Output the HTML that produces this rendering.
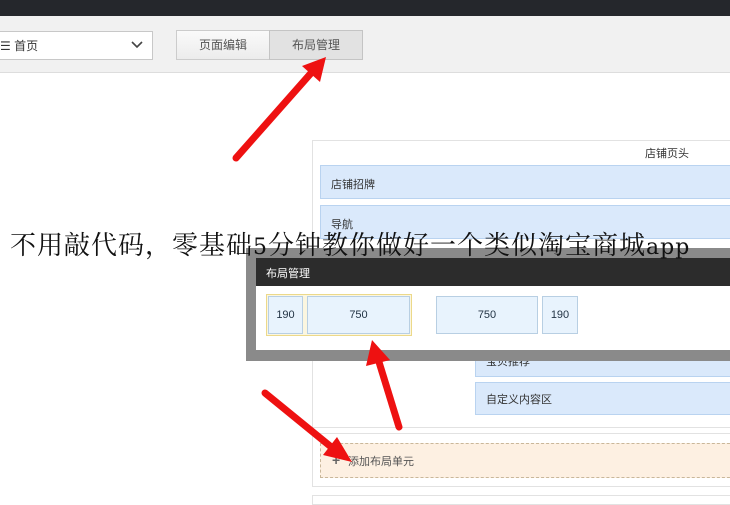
<!DOCTYPE html>
<html><head><meta charset="utf-8"><style>
*{margin:0;padding:0;box-sizing:border-box}
body{width:730px;height:500px;overflow:hidden;background:#fff;position:relative;font-family:"Liberation Sans","Noto Sans CJK SC",sans-serif;font-size:12px;color:#333}
.a{position:absolute}
.blue{background:#dae9fb;border:1px solid #b9d3f0}
.box{background:#e8f3fd;border:1px solid #b8cfe3;display:flex;align-items:center;justify-content:center;color:#234;font-size:11px}
</style></head><body>
<div class="a" style="left:0;top:0;width:730px;height:16px;background:#25272c"></div>
<div class="a" style="left:0;top:16px;width:730px;height:57px;background:#f1f1f1;border-bottom:1px solid #ddd"></div>
<div class="a" style="left:-2px;top:31px;width:155px;height:29px;background:#fff;border:1px solid #c8c8c8"></div>
<div class="a" style="left:0;top:37px;font-size:12px;">☰ 首页</div>
<svg class="a" style="left:130px;top:40px" width="14" height="10"><path d="M2 2 L7 7 L12 2" stroke="#444" stroke-width="1.6" fill="none"/></svg>
<div class="a" style="left:176px;top:30px;width:94px;height:30px;background:linear-gradient(#fafafa,#ececec);border:1px solid #ccc;text-align:center;line-height:28px;color:#555">页面编辑</div>
<div class="a" style="left:269px;top:30px;width:94px;height:30px;background:#e2e2e2;border:1px solid #c4c4c4;text-align:center;line-height:28px;color:#555">布局管理</div>

<div class="a" style="left:312px;top:140px;width:430px;height:288px;border:1px solid #e2e2e2"></div>
<div class="a" style="left:645px;top:145px;font-size:11px">店铺页头</div>
<div class="a blue" style="left:320px;top:165px;width:420px;height:34px;padding:10px 0 0 10px;font-size:11px">店铺招牌</div>
<div class="a blue" style="left:320px;top:205px;width:420px;height:34px;padding:10px 0 0 10px;font-size:11px">导航</div>
<div class="a blue" style="left:475px;top:340px;width:265px;height:37px;padding:12px 0 0 10px;font-size:11px">宝贝推荐</div>
<div class="a blue" style="left:475px;top:382px;width:265px;height:33px;padding:8px 0 0 10px;font-size:11px">自定义内容区</div>

<div class="a" style="left:312px;top:433px;width:430px;height:54px;border:1px solid #e2e2e2"></div>
<div class="a" style="left:320px;top:443px;width:420px;height:35px;background:#fdf0e2;border:1px dashed #c9b79a"></div>
<div class="a" style="left:332px;top:452px;font-size:14px;font-weight:bold;color:#666">+</div>
<div class="a" style="left:348px;top:453px;font-size:11px;color:#555">添加布局单元</div>
<div class="a" style="left:312px;top:495px;width:430px;height:10px;border:1px solid #e2e2e2"></div>

<div class="a" style="left:246px;top:248px;width:490px;height:113px;background:#8a8a8a"></div>
<div class="a" style="left:256px;top:258px;width:480px;height:28px;background:#2c2c2c;color:#fff;padding:7px 0 0 10px;font-size:11px">布局管理</div>
<div class="a" style="left:256px;top:286px;width:480px;height:64px;background:#fff"></div>
<div class="a" style="left:266px;top:294px;width:146px;height:42px;border:1px solid #ecd98a;background:#fbf6e0"></div>
<div class="a box" style="left:268px;top:296px;width:35px;height:38px">190</div>
<div class="a box" style="left:307px;top:296px;width:103px;height:38px">750</div>
<div class="a box" style="left:436px;top:296px;width:102px;height:38px">750</div>
<div class="a box" style="left:542px;top:296px;width:36px;height:38px">190</div>

<svg class="a" style="left:0;top:0" width="730" height="500">
<g stroke="#ee1111" stroke-width="7" stroke-linecap="round" fill="#ee1111">
<line x1="236" y1="158" x2="312" y2="72"/>
<line x1="399" y1="427" x2="379" y2="362"/>
<line x1="265" y1="393" x2="330" y2="446"/>
</g>
<g fill="#ee1111">
<polygon points="326,57 302,66 320,82"/>
<polygon points="372,340 366,366 390,360"/>
<polygon points="352,462 323,455 337,437"/>
</g>
</svg>
<div class="a" style="left:10px;top:225px;font-family:'Liberation Serif','Noto Serif CJK SC',serif;font-size:26px;letter-spacing:1px;color:#111;white-space:nowrap">不用敲代码，零基础<span style="font-family:'DejaVu Serif',serif;font-size:22px">5</span>分钟教你做好一个类似淘宝商城<span style="font-family:'DejaVu Serif',serif;font-size:22px">app</span></div>
</body></html>
